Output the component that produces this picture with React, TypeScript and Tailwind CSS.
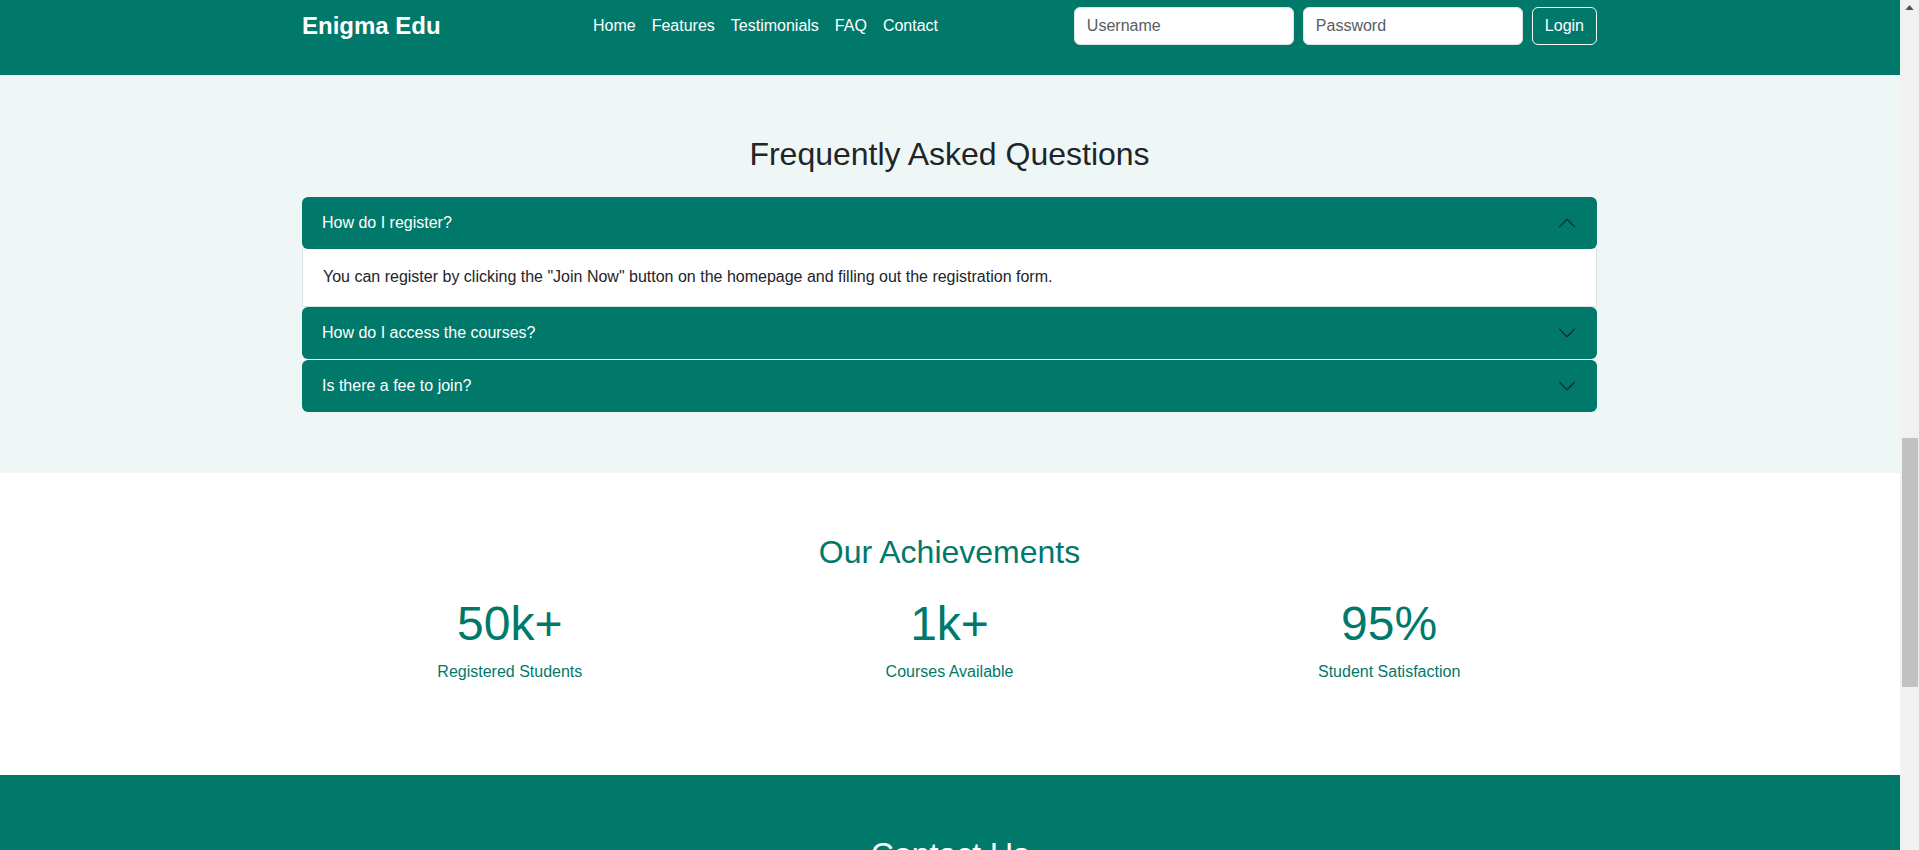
import React from 'react';

const faqs = [
  {
    q: 'How do I register?',
    a: 'You can register by clicking the "Join Now" button on the homepage and filling out the registration form.',
    open: true,
  },
  { q: 'How do I access the courses?', a: '', open: false },
  { q: 'Is there a fee to join?', a: '', open: false },
];

const stats = [
  { value: '50k+', label: 'Registered Students' },
  { value: '1k+', label: 'Courses Available' },
  { value: '95%', label: 'Student Satisfaction' },
];

const Chevron: React.FC<{ open: boolean }> = ({ open }) => (
  <svg
    viewBox="0 0 16 16"
    fill="none"
    stroke={open ? '#052c65' : '#212529'}
    strokeLinecap="round"
    strokeLinejoin="round"
    className={open ? 'w-5 h-5 shrink-0 rotate-180' : 'w-5 h-5 shrink-0'}
  >
    <path d="M2 5L8 11L14 5" />
  </svg>
);

const FaqHeader: React.FC<{ q: string; open: boolean }> = ({ q, open }) => (
  <button className="w-full h-[52px] flex items-center justify-between px-5 bg-[#00796b] text-white text-base leading-6 rounded-[6px] text-left">
    <span>{q}</span>
    <Chevron open={open} />
  </button>
);

const App: React.FC = () => {
  return (
    <div className="h-screen overflow-hidden flex font-['Liberation_Sans',Arial,sans-serif] text-[#212529]">
      <div className="w-[1900px] shrink-0 flex flex-col overflow-hidden">
        {/* Navbar */}
        <header className="h-[75px] shrink-0 bg-[#00796b] pt-[7px]">
          <div className="w-[1295px] ml-[302px] h-[38px] flex items-center">
            <a className="w-[283px] text-2xl font-bold text-white leading-9">Enigma Edu</a>
            <nav className="flex -mt-[1px]">
              {['Home', 'Features', 'Testimonials', 'FAQ', 'Contact'].map((l) => (
                <a key={l} className="px-2 text-white text-base leading-6">
                  {l}
                </a>
              ))}
            </nav>
            <form className="ml-auto flex gap-[9px]">
              <input
                placeholder="Username"
                className="w-[220px] h-[38px] bg-white border border-[#dee2e6] rounded-[6px] px-3 text-base text-[#212529] placeholder:text-[#595c5f] outline-none"
              />
              <input
                placeholder="Password"
                type="password"
                className="w-[220px] h-[38px] bg-white border border-[#dee2e6] rounded-[6px] px-3 text-base text-[#212529] placeholder:text-[#595c5f] outline-none"
              />
              <button
                type="button"
                className="h-[38px] px-3 border border-[#f8f9fa] rounded-[6px] text-white text-base leading-6"
              >
                Login
              </button>
            </form>
          </div>
        </header>

        {/* FAQ */}
        <section className="shrink-0 bg-[#eef7f6] pt-[60px] pb-[61px]">
          <div className="w-[1295px] ml-[302px]">
            <h2 className="text-[32px] leading-[38px] text-center mb-[24px]">Frequently Asked Questions</h2>
            <div className="flex flex-col">
              {faqs.map((f, i) => (
                <div key={f.q} className={i === 2 ? 'border-t border-white' : ''}>
                  <FaqHeader q={f.q} open={f.open} />
                  {f.open && (
                    <div className="bg-white border-x border-b border-[#dee2e6] px-5 pt-4 pb-[17px] text-base leading-6">
                      {f.a}
                    </div>
                  )}
                </div>
              ))}
            </div>
          </div>
        </section>

        {/* Achievements */}
        <section className="shrink-0 bg-white pt-[60px] pb-[91px] text-[#00796b]">
          <div className="w-[1295px] ml-[302px]">
            <h2 className="text-[32px] leading-[38px] text-center">Our Achievements</h2>
            <div className="grid grid-cols-3 gap-6 mt-[24px]">
              {stats.map((s) => (
                <div key={s.label} className="flex flex-col items-center">
                  <div className="text-[48px] leading-[58px]">{s.value}</div>
                  <div className="text-base leading-6 mt-[7px]">{s.label}</div>
                </div>
              ))}
            </div>
          </div>
        </section>

        {/* Contact */}
        <section className="flex-1 bg-[#00796b] pt-[60px] text-white">
          <h2 className="text-[32px] leading-[38px] text-center">Contact Us</h2>
        </section>
      </div>

      {/* Scrollbar */}
      <div className="flex-1 bg-[#f1f1f1] flex flex-col">
        <div className="h-[14px] flex items-center justify-center">
          <svg viewBox="0 0 10 6" className="w-[9px] h-[5px]">
            <path d="M0 6L5 0L10 6Z" fill="#505050" />
          </svg>
        </div>
        <div className="h-[424px]" />
        <div className="h-[249px] ml-[2px] mr-[1px] bg-[#c1c1c1]" />
      </div>
    </div>
  );
};

export default App;
